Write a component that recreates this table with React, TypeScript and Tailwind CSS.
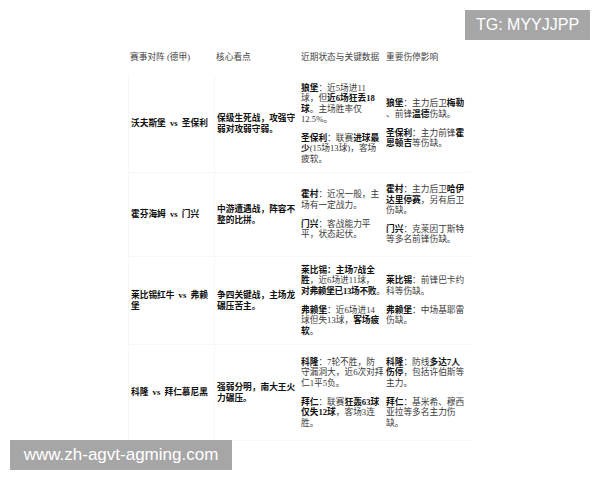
import React from "react";

const B = ({ children }: { children: React.ReactNode }) => (
  <b className="font-bold text-[#111]">{children}</b>
);

const Vs = () => <span className="px-[2px]"> vs </span>;

type Row = {
  h: string;
  team: React.ReactNode;
  focus: React.ReactNode;
  form: React.ReactNode[];
  injuries: React.ReactNode[];
};

const rows: Row[] = [
  {
    h: "h-[98px]",
    team: (
      <B>
        沃夫斯堡<Vs />圣保利
      </B>
    ),
    focus: (
      <B>
        保级生死战，攻强守
        <br />
        弱对攻弱守弱。
      </B>
    ),
    form: [
      <>
        <B>狼堡</B>：近5场进11
        <br />
        球，但<B>近6场狂丢18</B>
        <br />
        <B>球</B>。主场胜率仅
        <br />
        12.5%。
      </>,
      <>
        <B>圣保利</B>：联赛<B>进球最</B>
        <br />
        <B>少</B>(15场13球)，客场
        <br />
        疲软。
      </>,
    ],
    injuries: [
      <>
        <B>狼堡</B>：主力后卫<B>梅勒</B>
        <br />
        、前锋<B>温德</B>伤缺。
      </>,
      <>
        <B>圣保利</B>：主力前锋<B>霍</B>
        <br />
        <B>恩顿吉</B>等伤缺。
      </>,
    ],
  },
  {
    h: "h-[84px]",
    team: (
      <B>
        霍芬海姆<Vs />门兴
      </B>
    ),
    focus: (
      <B>
        中游遭遇战，阵容不
        <br />
        整的比拼。
      </B>
    ),
    form: [
      <>
        <B>霍村</B>：近况一般，主
        <br />
        场有一定战力。
      </>,
      <>
        <B>门兴</B>：客战能力平
        <br />
        平，状态起伏。
      </>,
    ],
    injuries: [
      <>
        <B>霍村</B>：主力后卫<B>哈伊</B>
        <br />
        <B>达里停赛</B>，另有后卫
        <br />
        伤缺。
      </>,
      <>
        <B>门兴</B>：克莱因丁斯特
        <br />
        等多名前锋伤缺。
      </>,
    ],
  },
  {
    h: "h-[88px]",
    team: (
      <B>
        莱比锡红牛<Vs />弗赖
        <br />堡
      </B>
    ),
    focus: (
      <B>
        争四关键战，主场龙
        <br />
        碾压苦主。
      </B>
    ),
    form: [
      <>
        <B>莱比锡：主场7战全</B>
        <br />
        <B>胜</B>，近6场进11球，
        <br />
        <span className="tracking-[-0.3px]">
          <B>对弗赖堡已13场不败</B>。
        </span>
      </>,
      <>
        <B>弗赖堡</B>：近6场进14
        <br />
        球但失13球，<B>客场疲</B>
        <br />
        <B>软</B>。
      </>,
    ],
    injuries: [
      <>
        <B>莱比锡</B>：前锋巴卡约
        <br />
        科等伤缺。
      </>,
      <>
        <B>弗赖堡</B>：中场基耶雷
        <br />
        伤缺。
      </>,
    ],
  },
  {
    h: "h-[96px]",
    team: (
      <B>
        科隆<Vs />拜仁慕尼黑
      </B>
    ),
    focus: (
      <B>
        强弱分明，南大王火
        <br />
        力碾压。
      </B>
    ),
    form: [
      <>
        <B>科隆</B>：7轮不胜，防
        <br />
        守漏洞大，近6次对拜
        <br />
        仁1平5负。
      </>,
      <>
        <B>拜仁</B>：联赛<B>狂轰63球</B>
        <br />
        <B>仅失12球</B>，客场3连
        <br />
        胜。
      </>,
    ],
    injuries: [
      <>
        <B>科隆</B>：防线<B>多达7人</B>
        <br />
        <B>伤停</B>，包括许伯斯等
        <br />
        主力。
      </>,
      <>
        <B>拜仁</B>：基米希、穆西
        <br />
        亚拉等多名主力伤
        <br />
        缺。
      </>,
    ],
  },
];

function Stack({ items }: { items: React.ReactNode[] }) {
  return (
    <div className="flex flex-col gap-[9px]">
      {items.map((it, i) => (
        <div key={i}>{it}</div>
      ))}
    </div>
  );
}

export default function App() {
  const cell = "flex items-center pl-[2px] whitespace-nowrap";
  const line = "border-b border-[#f7f7f7]";
  return (
    <div className="relative w-[600px] h-[480px] overflow-hidden bg-white font-['Liberation_Serif','Noto_Sans_CJK_SC',serif] text-[8.7px] leading-[10.3px] text-[#3a3a3a]">
      <div className="pt-[40px] pl-[128px]">
        <div className="grid grid-cols-[86px_85px_85px_86px] w-[342px]">
          {/* header */}
          <div className={`${cell} h-[35px] text-[#444]`}>赛事对阵 (德甲)</div>
          <div className={`${cell} h-[35px] text-[#444]`}>核心看点</div>
          <div className={`${cell} h-[35px] text-[#444]`}>近期状态与关键数据</div>
          <div className={`${cell} h-[35px] text-[#444]`}>重要伤停影响</div>

          {rows.map((r, i) => (
            <React.Fragment key={i}>
              <div className={`${cell} ${r.h} ${line} border-l`}>{r.team}</div>
              <div className={`${cell} ${r.h} ${line} border-l`}>{r.focus}</div>
              <div className={`${cell} ${r.h} ${line}`}>
                <Stack items={r.form} />
              </div>
              <div className={`${cell} ${r.h} ${line}`}>
                <Stack items={r.injuries} />
              </div>
            </React.Fragment>
          ))}
        </div>
      </div>

      {/* watermarks */}
      <div className="absolute top-[10px] left-[465px] w-[125px] h-[30px] bg-[#a6a6a6] flex items-center justify-center font-['Liberation_Sans',sans-serif] text-[16px] text-white">
        TG: MYYJJPP
      </div>
      <div className="absolute top-[440px] left-[10px] w-[222px] h-[30px] bg-[#a6a6a6] flex items-center justify-center font-['Liberation_Sans',sans-serif] text-[17px] text-white">
        www.zh-agvt-agming.com
      </div>
    </div>
  );
}
